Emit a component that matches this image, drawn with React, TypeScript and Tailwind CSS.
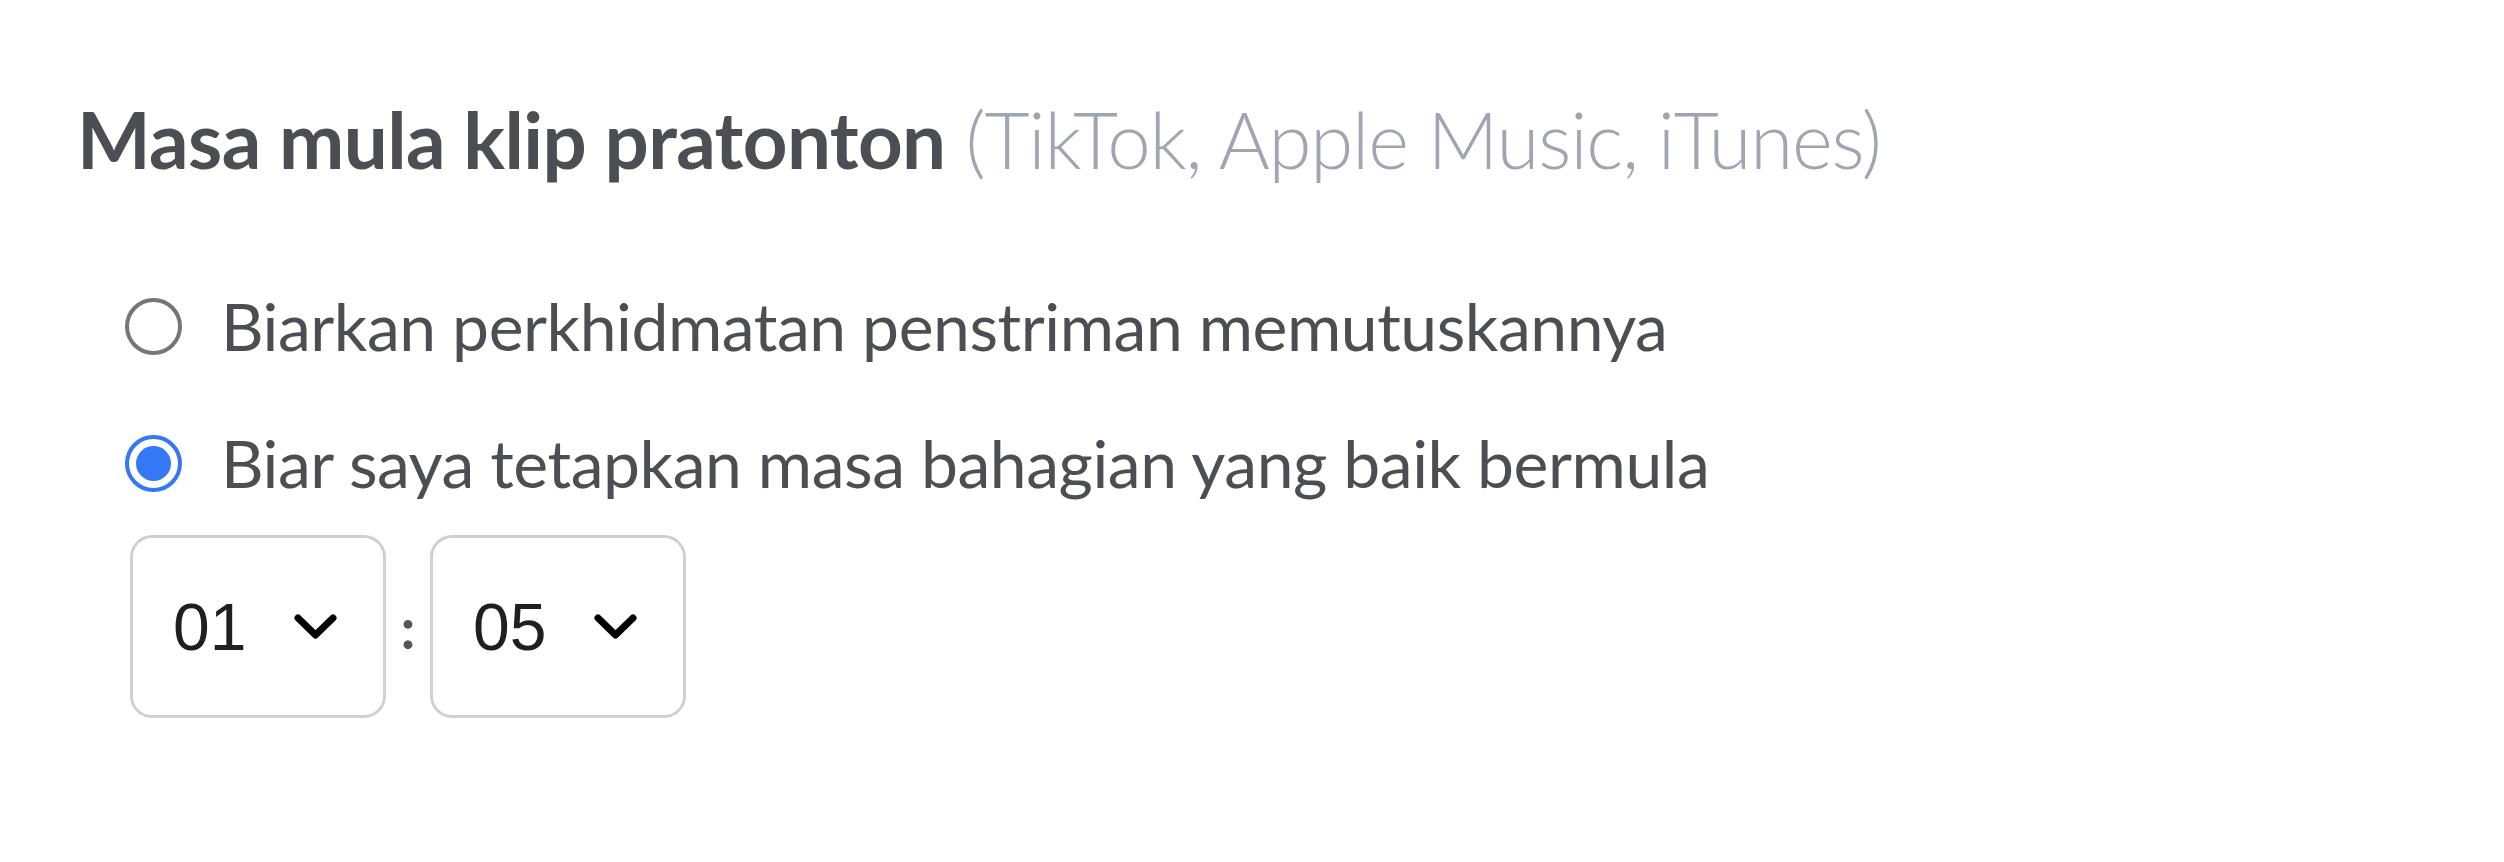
import { useState } from 'react';

const lato = { fontFamily: 'Lato, "Open Sans", sans-serif' };

function Chevron() {
  return (
    <svg width="43" height="25" viewBox="0 0 43 25" fill="none" className="shrink-0">
      <path d="M4 4 L21.5 21 L39 4" stroke="#000" strokeWidth="7" strokeLinecap="round" strokeLinejoin="round" />
    </svg>
  );
}

function TimeSelect({ value }: { value: string }) {
  return (
    <div className="flex h-[183px] w-[256px] items-center justify-between rounded-[22px] border-[3px] border-[#d0d0d0] bg-white pl-[40px] pr-[46px]">
      <span className="text-[66px] leading-none text-[#1f1f1f]" style={{ fontFamily: '"Liberation Sans", Arial, sans-serif' }}>
        {value}
      </span>
      <Chevron />
    </div>
  );
}

function Radio({ checked }: { checked: boolean }) {
  return checked ? (
    <span className="flex h-[57px] w-[57px] shrink-0 items-center justify-center rounded-full border-[4px] border-[#3478f6] bg-white">
      <span className="h-[35px] w-[35px] rounded-full bg-[#3478f6]" />
    </span>
  ) : (
    <span className="h-[57px] w-[57px] shrink-0 rounded-full border-[4px] border-[#767676] bg-white" />
  );
}

export default function App() {
  const [choice, setChoice] = useState(1);
  const options = ['Biarkan perkhidmatan penstriman memutuskannya', 'Biar saya tetapkan masa bahagian yang baik bermula'];

  return (
    <div className="min-h-[862px] w-full bg-white pl-[77px] pt-[100px]" style={lato}>
      <h2 className="text-[78px] leading-none text-[#4d4e53]">
        <span className="font-bold tracking-[-0.6px]">Masa mula klip pratonton</span>{' '}
        <span className="font-light tracking-[-1.2px] text-[#a0a6b1]">(TikTok, Apple Music, iTunes)</span>
      </h2>

      <div className="mt-[115px] flex flex-col gap-[71px] pl-[48px]">
        {options.map((label, i) => (
          <label key={i} className="flex cursor-pointer items-center gap-[39px]" onClick={() => setChoice(i)}>
            <Radio checked={choice === i} />
            <span className="text-[66px] leading-none tracking-[-0.45px] text-[#4d4e53]">{label}</span>
          </label>
        ))}
      </div>

      {/* Hour : minute pickers */}
      <div className="mt-[39px] flex items-center pl-[53px]">
        <TimeSelect value="01" />
        <span className="w-[44px] text-center text-[58px] font-bold leading-none text-[#55565b]">:</span>
        <TimeSelect value="05" />
      </div>
    </div>
  );
}
